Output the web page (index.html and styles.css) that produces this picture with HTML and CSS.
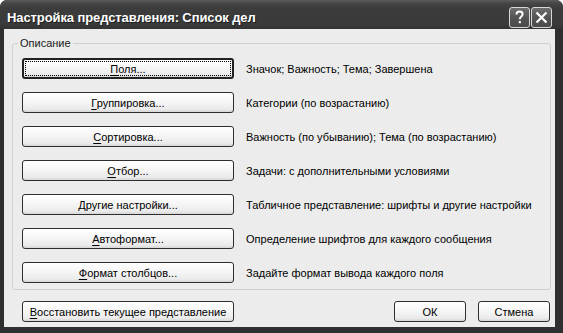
FILE: index.html
```html
<!DOCTYPE html>
<html lang="ru">
<head>
<meta charset="utf-8">
<title>Настройка представления</title>
<link rel="stylesheet" href="styles.css">
</head>
<body>
<div class="window">
  <div class="titlebar">
    <span class="title">Настройка представления: Список дел</span>
    <div class="caption-btns">
      <span class="cbtn">
        <svg width="19" height="19" viewBox="0 0 19 19"><path d="M6.5 6.6 C6.5 4.6 7.8 3.6 9.6 3.6 C11.4 3.6 12.6 4.7 12.6 6.2 C12.6 8.4 9.8 8.6 9.8 11.2" fill="none" stroke="#fff" stroke-width="2"/><rect x="8.8" y="13" width="2.1" height="2.2" fill="#fff"/></svg>
      </span>
      <span class="cbtn">
        <svg width="19" height="19" viewBox="0 0 19 19"><path d="M4.5 4.5 L14.5 14.5 M14.5 4.5 L4.5 14.5" stroke="#fff" stroke-width="2.2" fill="none"/></svg>
      </span>
    </div>
  </div>
  <div class="client">
    <fieldset class="group">
      <legend class="group-label">Описание</legend>
      <div class="row">
        <button class="btn wide focused"><span class="focus-rect"><u>П</u>оля...</span></button>
        <span class="desc">Значок; Важность; Тема; Завершена</span>
      </div>
      <div class="row">
        <button class="btn wide"><span><u>Г</u>руппировка...</span></button>
        <span class="desc">Категории (по возрастанию)</span>
      </div>
      <div class="row">
        <button class="btn wide"><span><u>С</u>ортировка...</span></button>
        <span class="desc">Важность (по убыванию); Тема (по возрастанию)</span>
      </div>
      <div class="row">
        <button class="btn wide"><span><u>О</u>тбор...</span></button>
        <span class="desc">Задачи: с дополнительными условиями</span>
      </div>
      <div class="row">
        <button class="btn wide"><span><u>Д</u>ругие настройки...</span></button>
        <span class="desc">Табличное представление: шрифты и другие настройки</span>
      </div>
      <div class="row">
        <button class="btn wide"><span><u>А</u>втоформат...</span></button>
        <span class="desc">Определение шрифтов для каждого сообщения</span>
      </div>
      <div class="row">
        <button class="btn wide"><span><u>Ф</u>ормат столбцов...</span></button>
        <span class="desc">Задайте формат вывода каждого поля</span>
      </div>
    </fieldset>
    <div class="footer">
      <button class="btn wide"><span><u>В</u>осстановить текущее представление</span></button>
      <div class="footer-right">
        <button class="btn small"><span>ОК</span></button>
        <button class="btn small"><span>Стмена</span></button>
      </div>
    </div>
  </div>
</div>
</body>
</html>
```
FILE: styles.css
```css
html, body {
  margin: 0;
  padding: 0;
  background: #ffffff;
}

.window {
  width: 563px;
  height: 333px;
  background: #2f2f2f;
  border-radius: 7px 7px 0 0;
  display: flex;
  flex-direction: column;
  box-sizing: border-box;
  overflow: hidden;
  font-family: "Liberation Sans", Arial, sans-serif;
}

.titlebar {
  height: 29px;
  flex: none;
  display: flex;
  align-items: flex-start;
  padding: 0 11px 0 7px;
  background: linear-gradient(to bottom, #5c5c5c 0, #474747 3px, #3c3c3c 8px, #3a3a3a 24px, #333333 29px);
}

.title {
  font-family: "Liberation Sans", Arial, sans-serif;
  font-weight: bold;
  font-size: 13px;
  letter-spacing: -0.1px;
  line-height: 15px;
  padding-top: 10px;
  color: #ffffff;
  text-shadow: 1px 1px 0 #1e1e1e;
  white-space: nowrap;
}

.caption-btns {
  margin-left: auto;
  margin-top: 7px;
  display: flex;
  gap: 1px;
}

.cbtn {
  width: 19px;
  height: 19px;
  border: 1px solid #d8d8d8;
  border-radius: 3px;
  background: linear-gradient(to bottom, #6e6e6e, #545454 50%, #4a4a4a);
  display: flex;
  align-items: center;
  justify-content: center;
}

.cbtn svg {
  display: block;
}

.client {
  flex: 1;
  margin: 0 8px 6px 4px;
  background: #ececec;
  display: flex;
  flex-direction: column;
  font-size: 11px;
  color: #000;
}

.group {
  margin: 8px 4px 0 8px;
  padding: 8px 9px 6px 9px;
  border: 1px solid #cfcfcf;
  border-radius: 3px;
  display: flex;
  flex-direction: column;
  gap: 13px;
  min-width: 0;
}

.group-label {
  padding: 0 2px;
  margin-left: -4px;
  line-height: 13px;
  font-size: 11px;
  color: #1a1a1a;
}

.row {
  display: flex;
  align-items: center;
  gap: 12px;
  height: 21px;
}

.btn {
  font-family: "Liberation Sans", Arial, sans-serif;
  font-size: 11px;
  color: #000;
  height: 21px;
  padding: 0;
  border: 1px solid #2e2e2e;
  border-radius: 3px;
  background: linear-gradient(to bottom, #ffffff 0, #f7f7f7 40%, #ebebeb 85%, #d6d6d6 100%);
  box-sizing: border-box;
  display: flex;
  align-items: center;
  justify-content: center;
  flex: none;
  white-space: nowrap;
}

.btn u {
  text-decoration: underline;
  text-underline-offset: 2px;
}

.wide {
  width: 212px;
}

.small {
  width: 72px;
}

.focused {
  border: 2px solid #222;
  padding: 1px;
}

.focus-rect {
  width: 100%;
  height: 100%;
  box-sizing: border-box;
  border: 1px dotted #000;
  display: flex;
  align-items: center;
  justify-content: center;
}

.desc {
  white-space: nowrap;
}

.footer {
  display: flex;
  align-items: center;
  margin-top: 11px;
  padding: 0 5px 0 18px;
}

.footer-right {
  margin-left: auto;
  display: flex;
  gap: 12px;
}
```
